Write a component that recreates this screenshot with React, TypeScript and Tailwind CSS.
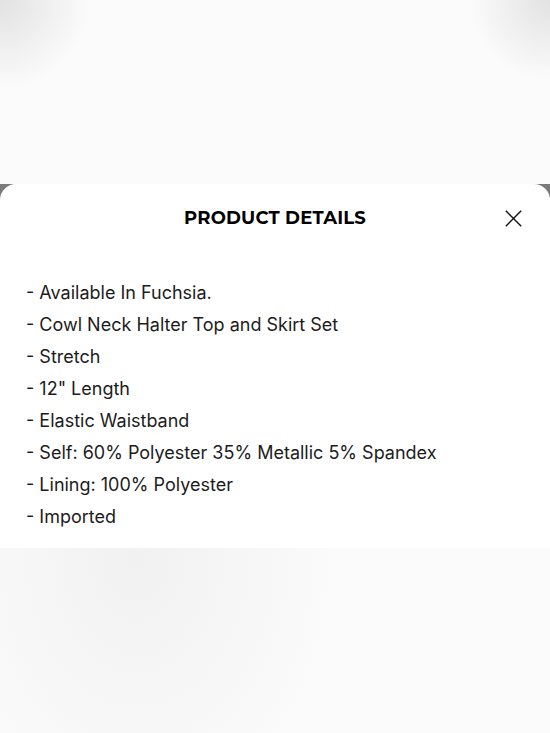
import React from "react";

const items = [
  "- Available In Fuchsia.",
  "- Cowl Neck Halter Top and Skirt Set",
  "- Stretch",
  '- 12" Length',
  "- Elastic Waistband",
  "- Self: 60% Polyester 35% Metallic 5% Spandex",
  "- Lining: 100% Polyester",
  "- Imported",
];

export default function App() {
  return (
    <div
      className="relative w-[550px] h-[733px] overflow-hidden flex flex-col bg-[#fbfbfb]"
      style={{ fontFamily: "Inter, 'Liberation Sans', sans-serif" }}
    >
      <div className="absolute inset-0 bg-[radial-gradient(circle_at_0%_0%,#e2e2e2_0px,rgba(251,251,251,0)_90px),radial-gradient(circle_at_100%_0%,#e2e2e2_0px,rgba(251,251,251,0)_80px),radial-gradient(ellipse_at_25%_76%,#f1f1f1_0%,rgba(251,251,251,0)_35%)]" />
      <div className="relative h-[184px] shrink-0" />
      <div className="relative bg-[#7b7b7b]">
        <div className="bg-white rounded-t-[16px] flex flex-col">
          <div className="relative h-[68px] flex items-center justify-center">
            <h2
              className="text-[18px] font-bold text-black tracking-[0.2px]"
              style={{ fontFamily: "'Montserrat', 'Inter', 'Liberation Sans', sans-serif" }}
            >
              PRODUCT DETAILS
            </h2>
            <button className="absolute right-[28px] top-[26px] w-[17px] h-[17px]">
              <svg viewBox="0 0 17 17" width="17" height="17" fill="none" stroke="#111" strokeWidth="1.4">
                <path d="M0.8 0.8 L16.2 16.2 M16.2 0.8 L0.8 16.2" />
              </svg>
            </button>
          </div>
          <ul className="pt-[25px] pb-[15px] pl-[26px] text-[18px] leading-[32px] text-[#1c1c1c]">
            {items.map((t) => (
              <li key={t}>{t}</li>
            ))}
          </ul>
        </div>
      </div>
    </div>
  );
}
